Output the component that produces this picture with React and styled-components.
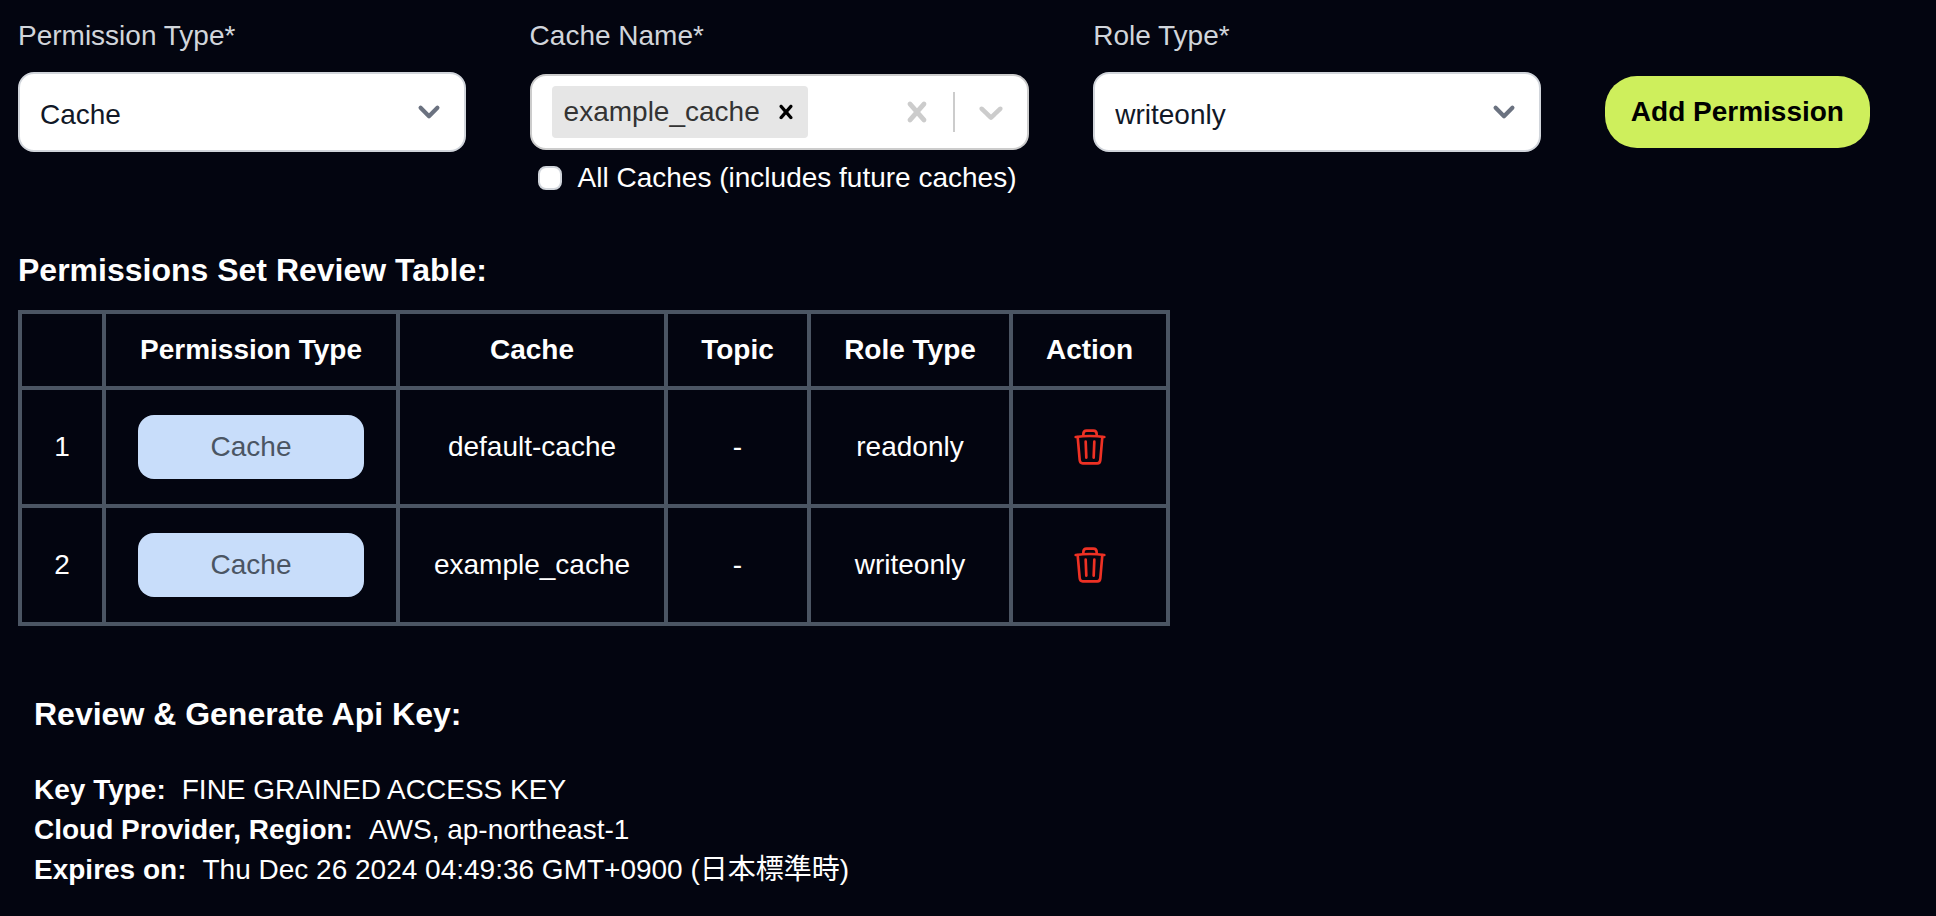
import React, { useState } from 'react';
import styled, { createGlobalStyle } from 'styled-components';

const GlobalStyle = createGlobalStyle`
  *,
  *::before,
  *::after {
    box-sizing: border-box;
  }

  body {
    margin: 0;
    background: #030510;
    color: #fff;
    font-family: 'Liberation Sans', 'Noto Sans CJK JP', Arial, sans-serif;
    font-size: 28px;
    line-height: 40px;
  }

  button,
  input,
  select {
    font: inherit;
  }
`;

const Page = styled.main`
  padding: 16px 0 16px 18px;
`;

const PermissionForm = styled.form`
  display: grid;
  grid-template-columns: minmax(0, 448fr) minmax(0, 500fr) minmax(0, 448fr) auto;
  grid-template-rows: auto 80px auto;
  column-gap: 64px;
  align-items: center;
  padding-right: 66px;
`;

const FieldLabel = styled.label`
  grid-row: 1;
  grid-column: ${props => props.$column};
  padding-bottom: 16px;
  color: #d1d5db;
`;

const SelectBox = styled.div`
  grid-row: 2;
  grid-column: ${props => props.$column};
  display: grid;
  align-items: center;

  > * {
    grid-area: 1 / 1;
  }

  svg {
    justify-self: end;
    margin-right: 16px;
    pointer-events: none;
  }
`;

const Select = styled.select`
  appearance: none;
  width: 100%;
  height: 80px;
  padding: 6px 64px 0 20px;
  border: 2px solid #d1d5db;
  border-radius: 16px;
  background: #fff;
  color: #111827;
`;

const MultiSelect = styled.div`
  grid-row: 2;
  grid-column: 2;
  display: flex;
  align-items: center;
  height: 76px;
  padding-left: 20px;
  border: 2px solid #ccc;
  border-radius: 16px;
  background: #fff;
`;

const Chip = styled.span`
  display: flex;
  align-items: center;
  gap: 4px;
  height: 52px;
  padding-left: 12px;
  border-radius: 4px;
  background: #e6e6e6;
  color: #333;
`;

const IconButton = styled.button`
  display: flex;
  align-items: center;
  justify-content: center;
  margin: 0 auto;
  padding: 0 ${props => props.$space || 0}px;
  border: 0;
  background: none;
  color: ${props => props.$color};
  cursor: pointer;
`;

const SearchInput = styled.input`
  flex: 1;
  width: 0;
  min-width: 0;
  padding: 0;
  border: 0;
  outline: 0;
  background: none;
`;

const Separator = styled.span`
  width: 2px;
  height: 40px;
  background: #ccc;
`;

const CheckboxLabel = styled.label`
  grid-row: 3;
  grid-column: 2;
  display: flex;
  align-items: center;
  gap: 16px;
  padding: 6px 0 0 8px;
  white-space: nowrap;
`;

const Checkbox = styled.input`
  appearance: none;
  width: 24px;
  height: 24px;
  margin: 0;
  border: 2px solid #d1d5db;
  border-radius: 8px;
  background: #fff;

  &:checked {
    background: #4b5563;
  }
`;

const AddButton = styled.button`
  grid-row: 2;
  grid-column: 4;
  height: 72px;
  padding: 0 26px;
  border: 0;
  border-radius: 32px;
  background: #ceef5c;
  color: #000;
  font-weight: bold;
  white-space: nowrap;
  cursor: pointer;
`;

const Heading = styled.h2`
  margin: 0;
  font-size: 32px;
  line-height: 48px;
  font-weight: bold;
`;

const TableSection = styled.section`
  margin-top: 48px;
`;

const Table = styled.table`
  margin-top: 16px;
  border-collapse: collapse;
  text-align: center;

  th,
  td {
    padding: 0 32px;
    border: 4px solid #4b5563;
  }
`;

const HeadCell = styled.th`
  width: ${props => props.$width}px;
  height: 76px;
  white-space: nowrap;
`;

const Cell = styled.td`
  height: 118px;
`;

const TypeBadge = styled.span`
  display: block;
  padding: 12px 0;
  border-radius: 16px;
  background: #c8ddfa;
  color: #4b5563;
`;

const Review = styled.section`
  margin-top: 64px;
  padding-left: 16px;
`;

const Details = styled.dl`
  margin: 32px 0 0;
`;

const Detail = styled.div`
  display: flex;
  gap: 16px;

  dt {
    font-weight: bold;
  }

  dd {
    margin: 0;
  }
`;

const SelectChevron = () => (
  <svg width="42" height="42" viewBox="0 0 20 20" fill="none" aria-hidden="true">
    <path
      d="M6 8l4 4 4-4"
      stroke="#6b7280"
      strokeWidth="2"
      strokeLinecap="round"
      strokeLinejoin="round"
    />
  </svg>
);

const CrossIcon = ({ size }) => (
  <svg width={size} height={size} viewBox="0 0 20 20" fill="currentColor" aria-hidden="true">
    <path d="M14.348 14.849c-0.469 0.469-1.229 0.469-1.697 0l-2.651-3.030-2.651 3.029c-0.469 0.469-1.229 0.469-1.697 0-0.469-0.469-0.469-1.229 0-1.697l2.758-3.15-2.759-3.152c-0.469-0.469-0.469-1.228 0-1.697s1.228-0.469 1.697 0l2.652 3.031 2.651-3.031c0.469-0.469 1.228-0.469 1.697 0s0.469 1.229 0 1.697l-2.758 3.152 2.758 3.15c0.469 0.469 0.469 1.229 0 1.698z" />
  </svg>
);

const DownIcon = () => (
  <svg width="40" height="40" viewBox="0 0 20 20" fill="currentColor" aria-hidden="true">
    <path d="M4.516 7.548c0.436-0.446 1.043-0.481 1.576 0l3.908 3.747 3.908-3.747c0.533-0.481 1.141-0.446 1.574 0 0.436 0.445 0.408 1.197 0 1.615-0.406 0.418-4.695 4.502-4.695 4.502-0.217 0.223-0.502 0.335-0.787 0.335s-0.57-0.112-0.789-0.335c0 0-4.287-4.084-4.695-4.502s-0.436-1.17 0-1.615z" />
  </svg>
);

const TrashIcon = () => (
  <svg
    width="32"
    height="36"
    viewBox="0 0 96 108"
    fill="none"
    stroke="currentColor"
    strokeWidth="8"
    strokeLinecap="round"
    strokeLinejoin="round"
    aria-hidden="true"
  >
    <path d="M5 24q43-6 86 0" />
    <path d="M28 19v-4q0-10 10-10h20q10 0 10 10v4" />
    <path d="M11 24l6 69q1 10 9 10h44q8 0 9-10l6-69" />
    <path d="M35 38l2 48M61 38l-2 48" />
  </svg>
);

const columns = [
  { title: '', width: 84 },
  { title: 'Permission Type', width: 294 },
  { title: 'Cache', width: 268 },
  { title: 'Topic', width: 143 },
  { title: 'Role Type', width: 202 },
  { title: 'Action', width: 157 }
];

const permissions = [
  { type: 'Cache', cache: 'default-cache', topic: '-', role: 'readonly' },
  { type: 'Cache', cache: 'example_cache', topic: '-', role: 'writeonly' }
];

const details = [
  ['Key Type:', 'FINE GRAINED ACCESS KEY'],
  ['Cloud Provider, Region:', 'AWS, ap-northeast-1'],
  ['Expires on:', 'Thu Dec 26 2024 04:49:36 GMT+0900 (日本標準時)']
];

export default function App() {
  const [allCaches, setAllCaches] = useState(false);

  return (
    <Page>
      <GlobalStyle />
      <PermissionForm onSubmit={e => e.preventDefault()}>
        <FieldLabel $column={1} htmlFor="permission-type">
          Permission Type*
        </FieldLabel>
        <SelectBox $column={1}>
          <Select id="permission-type" defaultValue="Cache">
            <option>Cache</option>
            <option>Topic</option>
          </Select>
          <SelectChevron />
        </SelectBox>

        <FieldLabel $column={2} htmlFor="cache-name">
          Cache Name*
        </FieldLabel>
        <MultiSelect>
          <Chip>
            example_cache
            <IconButton type="button" $space={8} $color="#000" aria-label="Remove example_cache">
              <CrossIcon size={28} />
            </IconButton>
          </Chip>
          <SearchInput id="cache-name" type="text" autoComplete="off" />
          <IconButton type="button" $space={16} $color="#ccc" aria-label="Clear caches">
            <CrossIcon size={40} />
          </IconButton>
          <Separator />
          <IconButton type="button" $space={16} $color="#ccc" aria-label="Show caches">
            <DownIcon />
          </IconButton>
        </MultiSelect>
        <CheckboxLabel>
          <Checkbox
            type="checkbox"
            checked={allCaches}
            onChange={e => setAllCaches(e.target.checked)}
          />
          All Caches (includes future caches)
        </CheckboxLabel>

        <FieldLabel $column={3} htmlFor="role-type">
          Role Type*
        </FieldLabel>
        <SelectBox $column={3}>
          <Select id="role-type" defaultValue="writeonly">
            <option>readonly</option>
            <option>writeonly</option>
            <option>readwrite</option>
          </Select>
          <SelectChevron />
        </SelectBox>

        <AddButton type="submit">Add Permission</AddButton>
      </PermissionForm>

      <TableSection>
        <Heading>Permissions Set Review Table:</Heading>
        <Table>
          <thead>
            <tr>
              {columns.map(({ title, width }) => (
                <HeadCell key={title} $width={width}>
                  {title}
                </HeadCell>
              ))}
            </tr>
          </thead>
          <tbody>
            {permissions.map(({ type, cache, topic, role }, index) => (
              <tr key={cache}>
                <Cell>{index + 1}</Cell>
                <Cell>
                  <TypeBadge>{type}</TypeBadge>
                </Cell>
                <Cell>{cache}</Cell>
                <Cell>{topic}</Cell>
                <Cell>{role}</Cell>
                <Cell>
                  <IconButton type="button" $color="#ee3124" aria-label={`Delete ${cache}`}>
                    <TrashIcon />
                  </IconButton>
                </Cell>
              </tr>
            ))}
          </tbody>
        </Table>
      </TableSection>

      <Review>
        <Heading>Review &amp; Generate Api Key:</Heading>
        <Details>
          {details.map(([term, value]) => (
            <Detail key={term}>
              <dt>{term}</dt>
              <dd>{value}</dd>
            </Detail>
          ))}
        </Details>
      </Review>
    </Page>
  );
}
